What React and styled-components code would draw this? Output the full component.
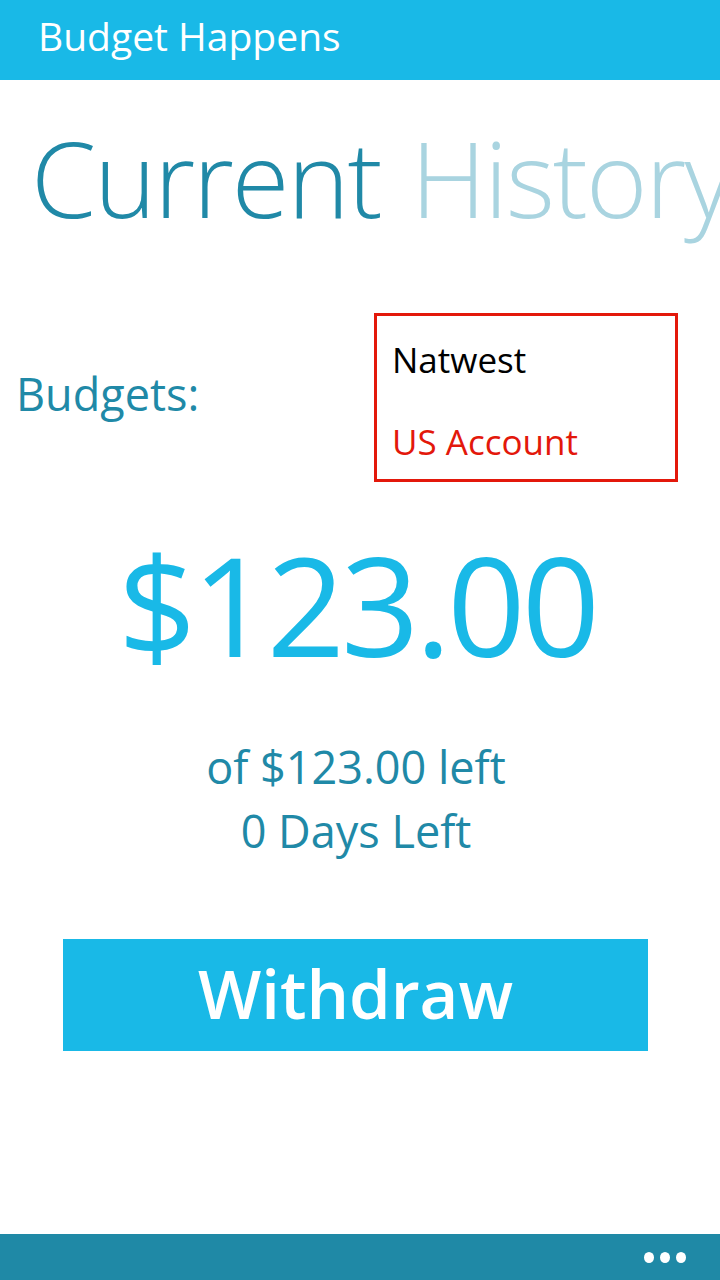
import React from 'react'
import styled, { createGlobalStyle } from 'styled-components'

const GlobalStyle = createGlobalStyle`
  html, body {
    margin: 0;
    padding: 0;
    background: #fff;
  }
  body {
    font-family: "Open Sans", "Noto Sans", sans-serif;
  }
`

const Screen = styled.div`
  width: 720px;
  height: 1280px;
  display: flex;
  flex-direction: column;
  overflow: hidden;
  background: #fff;
`

const TitleBar = styled.header`
  height: 80px;
  box-sizing: border-box;
  padding: 0 0 9px 38px;
  background: #19b9e7;
  color: #fff;
  display: flex;
  align-items: center;
  font-size: 39px;
  flex-shrink: 0;
`

const Pivot = styled.div`
  display: flex;
  gap: 30px;
  white-space: nowrap;
  padding-left: 31px;
  margin-top: 32px;
  height: 130px;
  align-items: center;
  font-size: 105px;
  font-weight: 300;
  letter-spacing: -2px;
`

const PivotItem = styled.span`
  color: ${p => (p.active ? '#2089a7' : '#a9d4e0')};
`

const BudgetRow = styled.div`
  display: flex;
  align-items: center;
  justify-content: space-between;
  padding: 0 42px 0 16px;
  margin-top: 71px;
`

const Label = styled.span`
  color: #2089a7;
  font-size: 45px;
  margin-bottom: 8px;
`

const Picker = styled.ul`
  list-style: none;
  margin: 0;
  width: 304px;
  height: 169px;
  border: 3px solid #e3180b;
  padding: 24px 15px 0;
  box-sizing: border-box;
  display: flex;
  flex-direction: column;
  gap: 42px;
`

const PickerItem = styled.li`
  font-size: 35px;
  line-height: 40px;
  color: ${p => (p.selected ? '#e3180b' : '#000')};
`

const Amount = styled.div`
  text-align: center;
  color: #19b9e7;
  font-size: 137px;
  line-height: 1;
  margin-top: 54px;
  letter-spacing: -4px;
  padding-right: 6px;
`

const Info = styled.div`
  text-align: center;
  color: #2089a7;
  font-size: 45px;
  line-height: 64px;
  margin-top: 62px;
  padding-right: 8px;
`

const Button = styled.button`
  display: block;
  margin: 76px 0 0 63px;
  width: 585px;
  height: 112px;
  border: none;
  background: #19b9e7;
  color: #fff;
  font-family: inherit;
  font-size: 67px;
  font-weight: 600;
  padding: 0 0 4px;
  cursor: pointer;
`

const Spacer = styled.div`
  flex: 1;
`

const AppBar = styled.footer`
  height: 46px;
  background: #1f89a6;
  display: flex;
  align-items: center;
  justify-content: flex-end;
  padding-right: 34px;
  flex-shrink: 0;
`

const Dots = styled.div`
  display: flex;
  gap: 6px;
`

const Dot = styled.span`
  width: 10px;
  height: 11px;
  border-radius: 50%;
  background: #fff;
`

export default function App() {
  return (
    <>
      <GlobalStyle />
      <Screen>
        <TitleBar>Budget Happens</TitleBar>
        <Pivot>
          <PivotItem active>Current</PivotItem>
          <PivotItem>History</PivotItem>
        </Pivot>
        <BudgetRow>
          <Label>Budgets:</Label>
          <Picker>
            <PickerItem>Natwest</PickerItem>
            <PickerItem selected>US Account</PickerItem>
          </Picker>
        </BudgetRow>
        <Amount>$123.00</Amount>
        <Info>
          <div>of $123.00 left</div>
          <div>0 Days Left</div>
        </Info>
        <Button>Withdraw</Button>
        <Spacer />
        <AppBar>
          <Dots>
            <Dot />
            <Dot />
            <Dot />
          </Dots>
        </AppBar>
      </Screen>
    </>
  )
}
